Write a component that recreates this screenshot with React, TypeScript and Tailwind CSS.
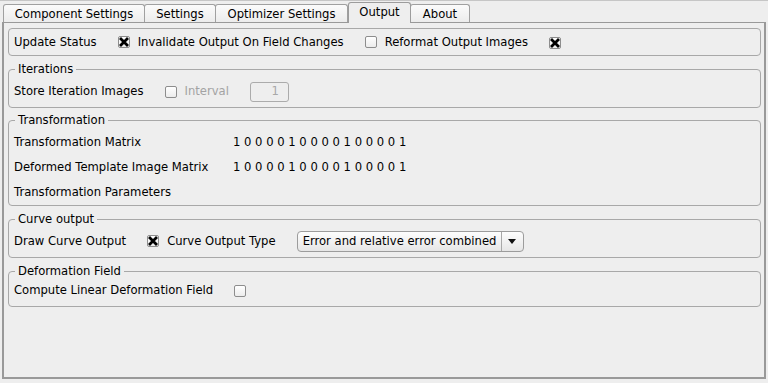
import React from "react";

function Check({ on }: { on?: boolean }) {
  return (
    <span className="w-[12px] h-[12px] shrink-0 border border-[#8d8d8d] rounded-[2px] bg-gradient-to-b from-[#ffffff] to-[#ececec] flex items-center justify-center">
      {on && (
        <svg width="10" height="10" viewBox="0 0 10 10">
          <path d="M2 2 L8 8 M8 2 L2 8" stroke="#000" strokeWidth="2.8" strokeLinecap="square" />
        </svg>
      )}
    </span>
  );
}

function Group({ title, children, className }: { title: string; children: React.ReactNode; className?: string }) {
  return (
    <fieldset className={`border border-[#a8a8a8] rounded-[4px] ${className ?? ""}`}>
      <legend className="ml-[6px] px-[3px] leading-[14px]">{title}</legend>
      {children}
    </fieldset>
  );
}

const tabs = [
  { label: "Component Settings", w: "w-[142px]" },
  { label: "Settings", w: "w-[72px]" },
  { label: "Optimizer Settings", w: "w-[133px]" },
  { label: "Output", w: "w-[63px]", active: true },
  { label: "About", w: "w-[60px]" },
];

const matrix = "1 0 0 0 0 1 0 0 0 0 1 0 0 0 0 1";

export default function App() {
  return (
    <div className="w-[768px] h-[383px] bg-[#eeeeee] border-t border-[#c6c6c6] font-['DejaVu_Sans',sans-serif] text-[11.6px] text-black overflow-hidden">
      <div className="flex items-end h-[21px] pl-[3px]">
        {tabs.map((t) =>
          t.active ? (
            <div
              key={t.label}
              className={`${t.w} h-[21px] -mb-px relative z-10 bg-[#eeeeee] border border-b-0 border-[#9c9c9c] rounded-t-[3px] flex items-center justify-center pb-[1px]`}
            >
              {t.label}
            </div>
          ) : (
            <div
              key={t.label}
              className={`${t.w} h-[18px] -ml-px first:ml-0 bg-gradient-to-b from-[#fbfbfb] to-[#ececec] border border-b-0 border-[#a0a0a0] rounded-t-[3px] flex items-center justify-center pt-[2px]`}
            >
              {t.label}
            </div>
          )
        )}
      </div>

      <div className="mx-[2px] h-[357px] border-t border-l-2 border-r-2 border-b-2 border-[#999999] pt-[5px] pl-[4px] pr-[3px] flex flex-col">
        <div className="h-[28px] border border-[#a8a8a8] rounded-[4px] flex items-center px-[5px] pt-[1px] gap-[21px]">
          <span>Update Status</span>
          <span className="flex items-center gap-[8px]">
            <Check on />
            <span>Invalidate Output On Field Changes</span>
          </span>
          <span className="flex items-center gap-[8px]">
            <Check />
            <span>Reformat Output Images</span>
          </span>
          <Check on />
        </div>

        <Group title="Iterations" className="mt-[6px]">
          <div className="flex items-center h-[20px] mt-[6px] mb-[5px] px-[5px] gap-[21px]">
            <span>Store Iteration Images</span>
            <span className="flex items-center gap-[8px]">
              <Check />
              <span className="text-[#a3a3a3]">Interval</span>
            </span>
            <span className="w-[39px] h-[20px] border border-[#ababab] rounded-[3px] flex items-center justify-end pr-[9px] text-[#a8a8a8]">
              1
            </span>
          </div>
        </Group>

        <Group title="Transformation" className="mt-[5px]">
          <div className="grid grid-cols-[219px_1fr] auto-rows-[25px] items-center px-[5px] pt-[3px]">
            <span>Transformation Matrix</span>
            <span>{matrix}</span>
            <span>Deformed Template Image Matrix</span>
            <span>{matrix}</span>
            <span>Transformation Parameters</span>
            <span></span>
          </div>
        </Group>

        <Group title="Curve output" className="mt-[6px]">
          <div className="flex items-center h-[21px] mt-[5px] mb-[5px] px-[5px] gap-[21px]">
            <span>Draw Curve Output</span>
            <span className="flex items-center gap-[8px]">
              <Check on />
              <span>Curve Output Type</span>
            </span>
            <span className="w-[227px] h-[21px] border border-[#9c9c9c] rounded-[4px] bg-gradient-to-b from-[#fdfdfd] to-[#e6e6e6] flex items-center">
              <span className="flex-1 pl-[5px]">Error and relative error combined</span>
              <span className="w-[22px] h-full border-l border-[#a8a8a8] flex items-center justify-center">
                <svg width="8" height="5" viewBox="0 0 8 5">
                  <path d="M0 0 L8 0 L4 5 Z" fill="#111" />
                </svg>
              </span>
            </span>
          </div>
        </Group>

        <Group title="Deformation Field" className="mt-[6px]">
          <div className="flex items-center h-[16px] mt-[5px] mb-[7px] px-[5px] gap-[21px]">
            <span>Compute Linear Deformation Field</span>
            <Check />
          </div>
        </Group>
      </div>
    </div>
  );
}
